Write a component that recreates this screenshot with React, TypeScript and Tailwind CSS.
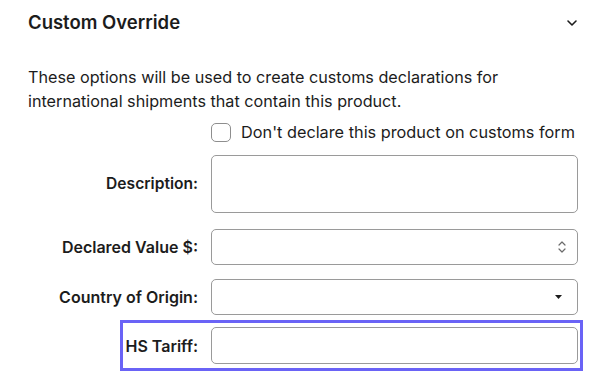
import { useState } from "react";

function Spinner() {
  return (
    <svg className="h-[14px] w-[8px]" viewBox="0 0 8 14" fill="none" stroke="#6b6b6b" strokeWidth={1.2}>
      <path d="M1 5 4 2l3 3" strokeLinecap="round" strokeLinejoin="round" />
      <path d="M1 9l3 3 3-3" strokeLinecap="round" strokeLinejoin="round" />
    </svg>
  );
}

export default function App() {
  const [skip, setSkip] = useState(false);

  return (
    <div className="h-[380px] w-[600px] overflow-hidden bg-white text-[#1c1c1c] [font-family:Inter,'Noto_Sans',sans-serif]">
      {/* Header */}
      <div className="flex items-center justify-between pl-[28px] pr-[22px] pt-[10px]">
        <h2 className="text-[18.5px] font-semibold leading-[25px]">Custom Override</h2>
        <svg className="h-[8px] w-[12px]" viewBox="0 0 12 8" fill="none" stroke="#1c1c1c" strokeWidth={1.6}>
          <path d="M2 2l4 4 4-4" strokeLinecap="round" strokeLinejoin="round" />
        </svg>
      </div>

      <p className="mt-[30px] pl-[28px] pr-[80px] text-[16.2px] leading-[24px]">
        These options will be used to create customs declarations for international shipments that contain this
        product.
      </p>

      {/* Form */}
      <div className="mt-[9px] flex flex-col">
        <label className="ml-[211px] flex items-center gap-[10px] text-[16.3px] leading-[20px]">
          <input
            type="checkbox"
            checked={skip}
            onChange={(e) => setSkip(e.target.checked)}
            className="h-[19px] w-[20px] appearance-none rounded-[5px] border border-[#8e8e8e] bg-white"
          />
          <span>Don't declare this product on customs form</span>
        </label>

        <div className="mt-[13px] flex items-center gap-[13px]">
          <span className="w-[198px] text-right text-[15.6px] font-semibold">Description:</span>
          <textarea className="h-[58px] w-[367px] resize-none rounded-[5px] border border-[#9a9a9a] bg-white outline-none" />
        </div>

        <div className="mt-[16px] flex items-center gap-[13px]">
          <span className="w-[198px] text-right text-[16px] font-semibold">Declared Value $:</span>
          <div className="flex h-[36px] w-[367px] items-center justify-end rounded-[5px] border border-[#9a9a9a] pr-[11px]">
            <Spinner />
          </div>
        </div>

        <div className="mt-[14px] flex items-center gap-[13px]">
          <span className="w-[198px] text-right text-[16px] font-semibold">Country of Origin:</span>
          <div className="flex h-[36px] w-[367px] items-center justify-end rounded-[5px] border border-[#9a9a9a] pr-[15px]">
            <svg className="h-[4px] w-[7px]" viewBox="0 0 7 4" fill="#1c1c1c">
              <path d="M0 0h7L3.5 4z" />
            </svg>
          </div>
        </div>

        <div className="ml-[120px] mt-[5px] flex w-[463px] items-center gap-[13px] border-[3px] border-[#6a63f6] py-[4px]">
          <span className="w-[75px] whitespace-nowrap text-right text-[16px] font-semibold">HS Tariff:</span>
          <input className="h-[37px] w-[367px] rounded-[5px] border border-[#9a9a9a] bg-white outline-none" />
        </div>
      </div>
    </div>
  );
}
